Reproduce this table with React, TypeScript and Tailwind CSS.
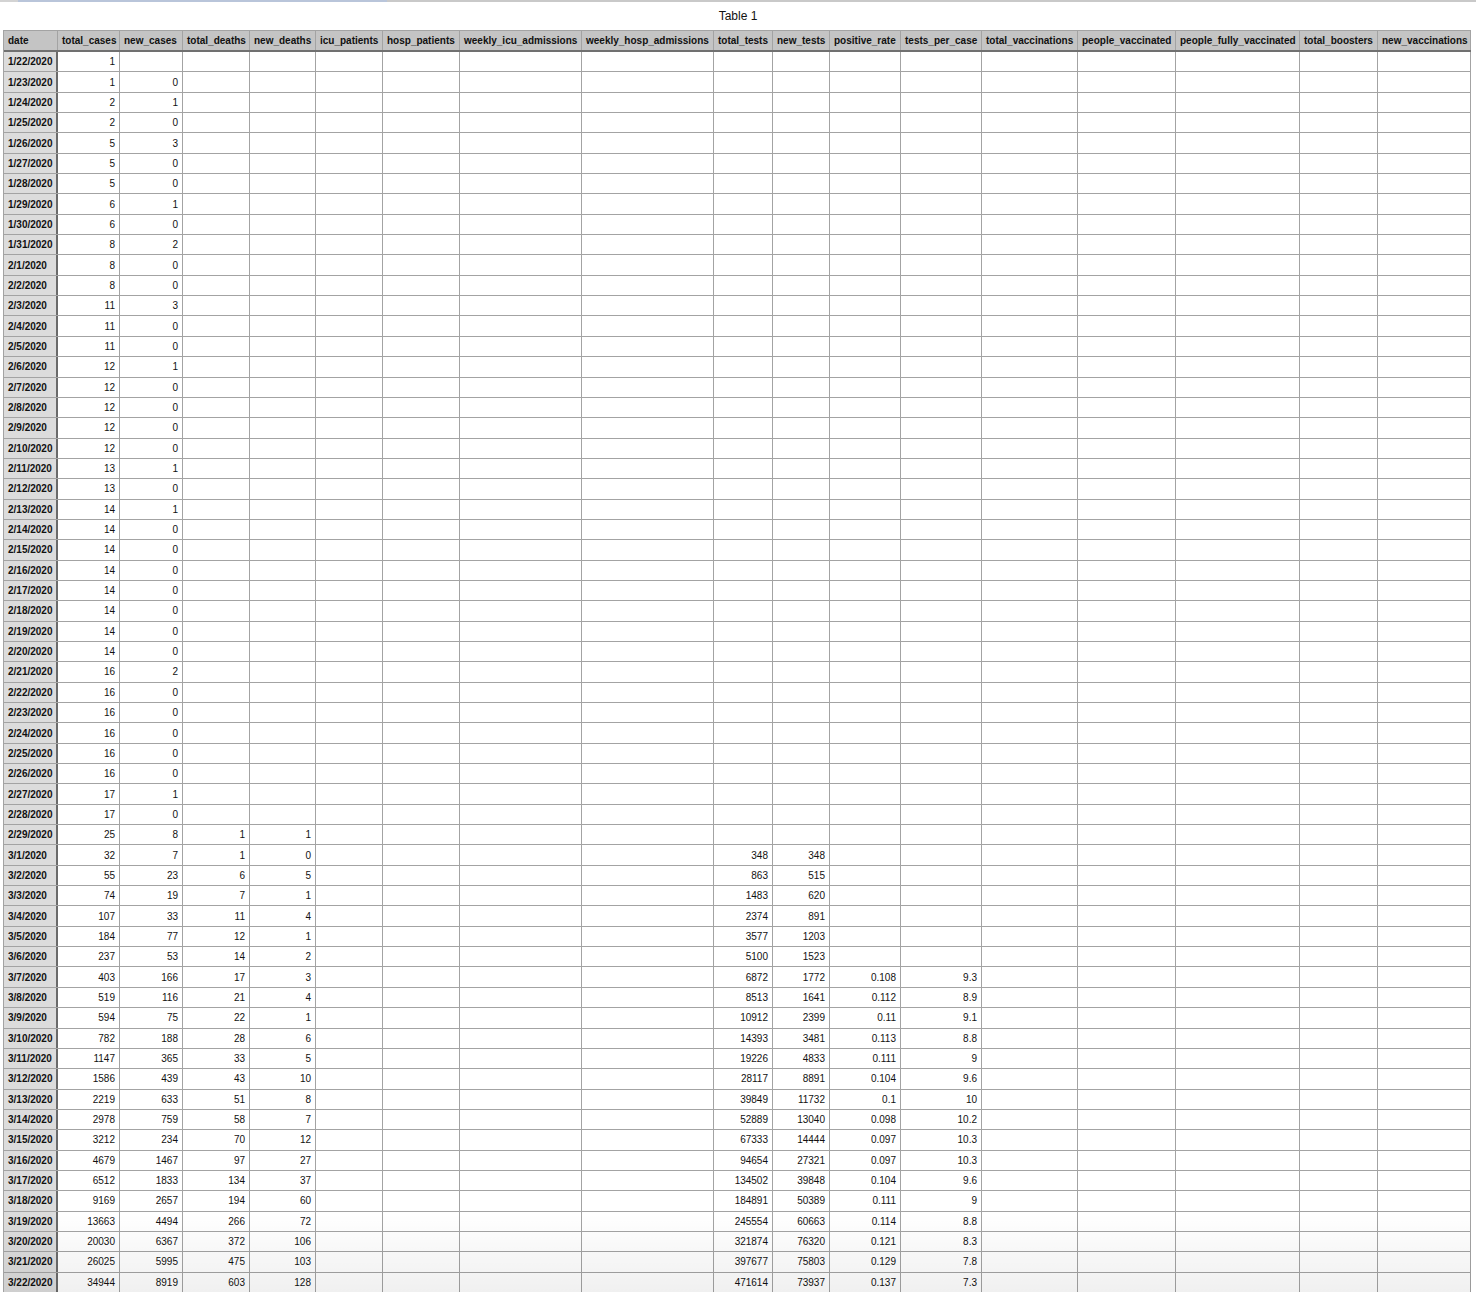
import React from "react";

const columns = [
  { name: "date", w: 54 },
  { name: "total_cases", w: 62 },
  { name: "new_cases", w: 63 },
  { name: "total_deaths", w: 67 },
  { name: "new_deaths", w: 66 },
  { name: "icu_patients", w: 67 },
  { name: "hosp_patients", w: 77 },
  { name: "weekly_icu_admissions", w: 122 },
  { name: "weekly_hosp_admissions", w: 132 },
  { name: "total_tests", w: 59 },
  { name: "new_tests", w: 57 },
  { name: "positive_rate", w: 71 },
  { name: "tests_per_case", w: 81 },
  { name: "total_vaccinations", w: 96 },
  { name: "people_vaccinated", w: 98 },
  { name: "people_fully_vaccinated", w: 124 },
  { name: "total_boosters", w: 78 },
  { name: "new_vaccinations", w: 93 },
];

// date, total_cases, new_cases, total_deaths, new_deaths, total_tests, new_tests, positive_rate, tests_per_case
const raw = `1/22/2020,1
1/23/2020,1,0
1/24/2020,2,1
1/25/2020,2,0
1/26/2020,5,3
1/27/2020,5,0
1/28/2020,5,0
1/29/2020,6,1
1/30/2020,6,0
1/31/2020,8,2
2/1/2020,8,0
2/2/2020,8,0
2/3/2020,11,3
2/4/2020,11,0
2/5/2020,11,0
2/6/2020,12,1
2/7/2020,12,0
2/8/2020,12,0
2/9/2020,12,0
2/10/2020,12,0
2/11/2020,13,1
2/12/2020,13,0
2/13/2020,14,1
2/14/2020,14,0
2/15/2020,14,0
2/16/2020,14,0
2/17/2020,14,0
2/18/2020,14,0
2/19/2020,14,0
2/20/2020,14,0
2/21/2020,16,2
2/22/2020,16,0
2/23/2020,16,0
2/24/2020,16,0
2/25/2020,16,0
2/26/2020,16,0
2/27/2020,17,1
2/28/2020,17,0
2/29/2020,25,8,1,1
3/1/2020,32,7,1,0,348,348
3/2/2020,55,23,6,5,863,515
3/3/2020,74,19,7,1,1483,620
3/4/2020,107,33,11,4,2374,891
3/5/2020,184,77,12,1,3577,1203
3/6/2020,237,53,14,2,5100,1523
3/7/2020,403,166,17,3,6872,1772,0.108,9.3
3/8/2020,519,116,21,4,8513,1641,0.112,8.9
3/9/2020,594,75,22,1,10912,2399,0.11,9.1
3/10/2020,782,188,28,6,14393,3481,0.113,8.8
3/11/2020,1147,365,33,5,19226,4833,0.111,9
3/12/2020,1586,439,43,10,28117,8891,0.104,9.6
3/13/2020,2219,633,51,8,39849,11732,0.1,10
3/14/2020,2978,759,58,7,52889,13040,0.098,10.2
3/15/2020,3212,234,70,12,67333,14444,0.097,10.3
3/16/2020,4679,1467,97,27,94654,27321,0.097,10.3
3/17/2020,6512,1833,134,37,134502,39848,0.104,9.6
3/18/2020,9169,2657,194,60,184891,50389,0.111,9
3/19/2020,13663,4494,266,72,245554,60663,0.114,8.8
3/20/2020,20030,6367,372,106,321874,76320,0.121,8.3
3/21/2020,26025,5995,475,103,397677,75803,0.129,7.8
3/22/2020,34944,8919,603,128,471614,73937,0.137,7.3`;

// map parsed values onto the 18 columns
const rows = raw.split("\n").map((line) => {
  const v = line.split(",");
  const cells: string[] = Array(18).fill("");
  cells[0] = v[0];
  [1, 2, 3, 4].forEach((c, i) => (cells[c] = v[i + 1] ?? ""));
  [9, 10, 11, 12].forEach((c, i) => (cells[c] = v[i + 5] ?? ""));
  return cells;
});

export default function App() {
  return (
    <div className="min-h-screen bg-white font-['Liberation_Sans',Arial,sans-serif] text-[10px] text-[#111]">
      <div className="flex h-[2px]">
        <div className="w-[18px] bg-[#d3d3d3]" />
        <div className="w-[369px] bg-[#b9c5da]" />
        <div className="flex-1 bg-[#c9c9c9]" />
      </div>
      <div className="flex h-[28px] w-[1476px] items-center justify-center pb-[1px] text-[12px]">
        Table 1
      </div>
      <div className="relative ml-[3px] w-[1468px] overflow-hidden border-l border-t border-[#a3a3a3]">
        <div className="flex h-[21px] border-b-2 border-[#707070] bg-[#c4c4c4] font-bold">
          {columns.map((col) => (
            <div
              key={col.name}
              className="flex shrink-0 items-center overflow-hidden whitespace-nowrap border-r border-[#a3a3a3] pl-[4px]"
              style={{ width: col.w }}
            >
              {col.name}
            </div>
          ))}
        </div>
        {rows.map((cells) => (
          <div key={cells[0]} className="flex h-[20.35px] border-b border-[#a3a3a3]">
            {cells.map((val, i) =>
              i === 0 ? (
                <div
                  key={i}
                  className="flex shrink-0 items-center border-r-2 border-[#6a6a6a] bg-[#dcdcdc] pl-[4px] font-bold"
                  style={{ width: columns[i].w }}
                >
                  {val}
                </div>
              ) : (
                <div
                  key={i}
                  className="flex shrink-0 items-center justify-end border-r border-[#a3a3a3] pr-[4px]"
                  style={{ width: columns[i].w }}
                >
                  {val}
                </div>
              )
            )}
          </div>
        ))}
        <div className="pointer-events-none absolute bottom-0 left-0 right-0 h-[80px] bg-gradient-to-b from-transparent to-black/[0.06]" />
      </div>
    </div>
  );
}
